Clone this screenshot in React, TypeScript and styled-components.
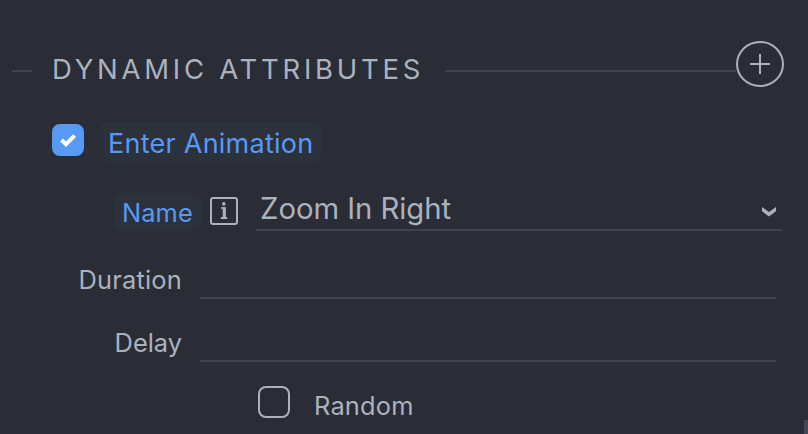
import React from 'react';
import styled, { createGlobalStyle } from 'styled-components';

const line = '#40424f';
const ink = '#abb2bf';
const blue = '#5899f5';

const GlobalStyle = createGlobalStyle`
  * { box-sizing: border-box; }
  body { margin: 0; background: #2a2d35; overflow: hidden; }
`;

const Panel = styled.main`
  display: flex;
  width: 808px;
  height: 434px;
  background: #2a2d35;
  color: ${ink};
  font-family: Inter, 'Open Sans', sans-serif;
`;

const Content = styled.div`
  display: flex;
  flex-direction: column;
  width: 804px;
`;

const ScrollThumb = styled.div`
  align-self: flex-end;
  width: 4px;
  height: 14px;
  background: #454756;
`;

const Header = styled.header`
  display: flex;
  align-items: flex-start;
  height: 46px;
  margin-top: 41px;
  padding-left: 12px;
`;

const Rule = styled.div<{ $width: number }>`
  width: ${(p) => p.$width}px;
  height: 2px;
  margin-top: 29px;
  background: ${line};
`;

const Title = styled.h2`
  width: 393px;
  margin: 0 0 0 20px;
  font-size: 27.5px;
  font-weight: 400;
  line-height: 56px;
  letter-spacing: 3.73px;
  white-space: nowrap;
`;

const AddButton = styled.button`
  width: 48px;
  height: 46px;
  padding: 0;
  border: 0;
  background: none;
  color: inherit;
  svg { display: block; }
`;

const Row = styled.div<{ $top: number; $height: number; $left: number }>`
  display: flex;
  align-items: flex-start;
  height: ${(p) => p.$height}px;
  margin-top: ${(p) => p.$top}px;
  padding-left: ${(p) => p.$left}px;
`;

const Checkbox = styled.div<{ $checked?: boolean }>`
  display: grid;
  place-items: center;
  width: 32px;
  height: 32px;
  border: 2px solid ${(p) => (p.$checked ? blue : ink)};
  border-radius: 8px;
  background: ${(p) => (p.$checked ? blue : 'transparent')};
`;

const CheckSlot = styled.div`
  padding-top: 2px;
  margin-right: 16px;
`;

const Chip = styled.div<{ $width: number; $height: number; $size: number; $spacing: number }>`
  width: ${(p) => p.$width}px;
  height: ${(p) => p.$height}px;
  padding-left: 8px;
  border-radius: 8px;
  background: #2b323b;
  color: ${blue};
  font-size: ${(p) => p.$size}px;
  line-height: ${(p) => (p.$height === 41 ? 43 : 39)}px;
  letter-spacing: ${(p) => p.$spacing}px;
  white-space: nowrap;
`;

const InfoSlot = styled.div`
  width: 28px;
  margin: 4px 18px 0 9px;
  svg { display: block; }
`;

const Select = styled.div`
  display: flex;
  justify-content: space-between;
  width: 526px;
  height: 38px;
  padding: 0 5px 0 4px;
  border-bottom: 2px solid ${line};
  font-size: 29.3px;
  line-height: 31px;
  letter-spacing: -0.05px;
  white-space: nowrap;
  svg { margin-top: 13px; }
`;

const Label = styled.label<{ $spacing: number }>`
  width: 182px;
  margin-right: 18px;
  font-size: 25.4px;
  line-height: 36px;
  letter-spacing: ${(p) => p.$spacing}px;
  text-align: right;
  white-space: nowrap;
`;

const Field = styled.div`
  width: 576px;
  height: 37px;
  border-bottom: 2px solid ${line};
`;

const RandomLabel = styled.span`
  margin-left: 24px;
  font-size: 25.4px;
  line-height: 39px;
  letter-spacing: 0.18px;
`;

export default function App() {
  return (
    <Panel>
      <GlobalStyle />
      <Content>
        <Header>
          <Rule $width={20} />
          <Title>DYNAMIC ATTRIBUTES</Title>
          <Rule $width={291} />
          <AddButton aria-label="Add attribute">
            <svg width="48" height="46" viewBox="0 0 48 46" fill="none" stroke={ink} strokeWidth="2">
              <ellipse cx="24" cy="23" rx="23" ry="22" />
              <path d="M14 23H34M24 13V33" />
            </svg>
          </AddButton>
        </Header>

        <Row $top={35} $height={41} $left={52}>
          <CheckSlot>
            <Checkbox $checked>
              <svg width="18" height="16" viewBox="0 0 18 16" fill="none" stroke="#fff" strokeWidth="4">
                <path d="M2.5 8L7 12.2L15.6 3.6" />
              </svg>
            </Checkbox>
          </CheckSlot>
          <Chip $width={221} $height={41} $size={27} $spacing={0.25}>Enter Animation</Chip>
        </Row>

        <Row $top={30} $height={38} $left={114}>
          <Chip $width={87} $height={38} $size={25.4} $spacing={0.1}>Name</Chip>
          <InfoSlot>
            <svg width="28" height="28" viewBox="0 0 28 28" fill="none" stroke={ink} strokeWidth="2">
              <rect x="1" y="1" width="26" height="26" rx="2" />
              <path d="M11 11H15V20.8" strokeWidth="1.6" />
              <path d="M14 10.2V21" strokeWidth="2.6" />
              <path d="M10.8 21H17.2" strokeWidth="2" />
              <circle cx="13.8" cy="6.9" r="1.8" fill={ink} stroke="none" />
            </svg>
          </InfoSlot>
          <Select>
            <span>Zoom In Right</span>
            <svg width="16" height="12" viewBox="0 0 16 12" fill={ink}>
              <path d="M1 1L8 6L15 1V5.3L8 10.5L1 5.3Z" />
            </svg>
          </Select>
        </Row>

        <Row $top={31} $height={37} $left={0}>
          <Label $spacing={0.22}>Duration</Label>
          <Field />
        </Row>
        <Row $top={26} $height={37} $left={0}>
          <Label $spacing={0}>Delay</Label>
          <Field />
        </Row>
        <Row $top={24} $height={39} $left={258}>
          <Checkbox />
          <RandomLabel>Random</RandomLabel>
        </Row>
      </Content>
      <ScrollThumb />
    </Panel>
  );
}
